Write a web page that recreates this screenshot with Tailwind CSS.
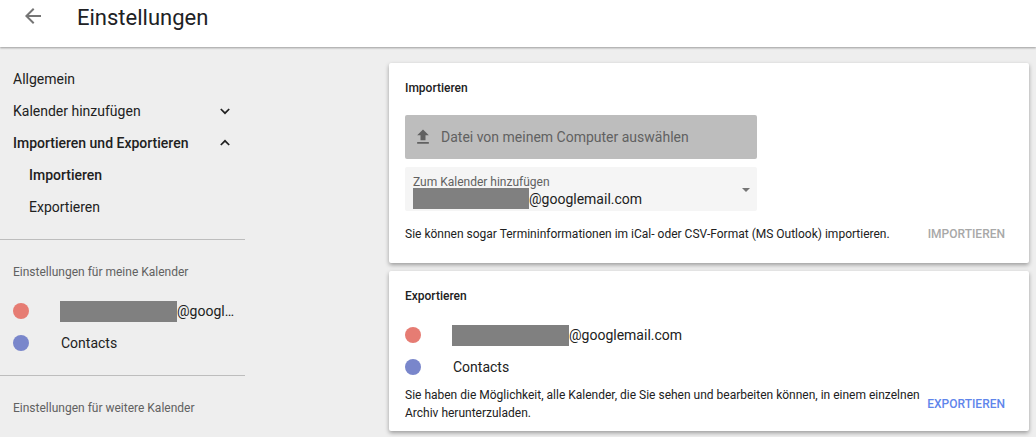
<html>

<head>
    <meta charset="utf-8" />
    <script src="https://cdn.jsdelivr.net/npm/@tailwindcss/browser@4"></script>
</head>

<body class="h-[437px] overflow-hidden bg-[#eeeeee] font-['Roboto',sans-serif] text-[#212121]">

    <header class="flex h-[47px] items-center bg-white shadow-[0_1px_2px_rgba(0,0,0,0.35)] relative">
        <svg class="ml-[21px] -mt-[16px] h-6 w-6 text-[#757575]" viewBox="0 0 24 24" fill="currentColor">
            <path d="M20 11H7.83l5.59-5.59L12 4l-8 8 8 8 1.41-1.41L7.83 13H20v-2z" />
        </svg>
        <h1 class="ml-[32px] -mt-[11px] text-[22px] leading-7 text-[#202124]">Einstellungen</h1>
    </header>

    <div class="flex">
        <nav class="w-[245px] pt-4 text-sm">
            <div class="flex h-8 items-center pl-[13px]">Allgemein</div>
            <div class="flex h-8 items-center justify-between pl-[13px] pr-3">
                Kalender hinzufügen
                <svg class="h-4 w-4" viewBox="0 0 16 16" fill="none" stroke="currentColor" stroke-width="1.7"><path d="M3.8 6l4.2 4.2L12.2 6" /></svg>
            </div>
            <div class="flex h-8 items-center justify-between pl-[13px] pr-3 font-medium">
                Importieren und Exportieren
                <svg class="h-4 w-4" viewBox="0 0 16 16" fill="none" stroke="currentColor" stroke-width="1.7"><path d="M3.8 10L8 5.8l4.2 4.2" /></svg>
            </div>
            <div class="flex h-8 items-center pl-[29px] font-medium">Importieren</div>
            <div class="flex h-8 items-center pl-[29px]">Exportieren</div>

            <div class="mt-4 border-t border-[#bdbdbd] pt-6">
                <div class="pl-[13px] text-xs leading-4 text-[#616161]">Einstellungen für meine Kalender</div>
                <div class="mt-[15px] flex h-8 items-center pl-[13px]">
                    <span class="h-4 w-4 shrink-0 rounded-full bg-[#e67c73]"></span>
                    <span class="ml-[31px] h-[21px] w-[117px] shrink-0 bg-[#808080]"></span>
                    <span class="truncate pr-[8px]">@googlemail.com</span>
                </div>
                <div class="flex h-8 items-center pl-[13px]">
                    <span class="h-4 w-4 shrink-0 rounded-full bg-[#7986cb]"></span>
                    <span class="ml-[32px]">Contacts</span>
                </div>
            </div>

            <div class="mt-4 border-t border-[#bdbdbd] pt-6">
                <div class="pl-[13px] text-xs leading-4 text-[#616161]">Einstellungen für weitere Kalender</div>
            </div>
        </nav>

        <main class="ml-[144px] w-[640px] pt-4">
            <section class="h-[200px] rounded-[2px] bg-white pl-4 pr-6 pt-[17px] shadow-[0_2px_4px_rgba(0,0,0,0.35)]">
                <h2 class="text-xs font-medium leading-4">Importieren</h2>
                <div class="mt-[19px] flex h-11 w-[352px] items-center rounded-[2px] bg-[#bdbdbd] pl-2 text-sm text-[#616161]">
                    <svg class="h-5 w-5" viewBox="0 0 24 24" fill="currentColor"><path d="M9 16h6v-6h4l-7-7-7 7h4v6zm-4 2h14v2H5v-2z" /></svg>
                    <span class="ml-2">Datei von meinem Computer auswählen</span>
                </div>
                <div class="relative mt-2 h-11 w-[352px] rounded-[2px] bg-[#f5f5f5] pl-2 pt-2">
                    <div class="text-xs leading-[14px] text-[#616161]">Zum Kalender hinzufügen</div>
                    <div class="-mt-px flex h-[21px] items-center text-sm">
                        <span class="h-[21px] w-[116px] bg-[#808080]"></span>@googlemail.com
                    </div>
                    <span class="absolute right-[7px] top-[21px] h-0 w-0 border-x-[4px] border-t-[4px] border-x-transparent border-t-[#757575]"></span>
                </div>
                <div class="mt-[15px] flex items-center justify-between text-xs leading-4">
                    <span>Sie können sogar Termininformationen im iCal- oder CSV-Format (MS Outlook) importieren.</span>
                    <span class="font-medium text-[#a8a8a8]">IMPORTIEREN</span>
                </div>
            </section>

            <section class="mt-2 h-[160px] rounded-[2px] bg-white pl-4 pr-6 pt-[17px] shadow-[0_2px_4px_rgba(0,0,0,0.35)]">
                <h2 class="text-xs font-medium leading-4">Exportieren</h2>
                <div class="mt-[15px] flex h-8 items-center text-sm">
                    <span class="h-4 w-4 shrink-0 rounded-full bg-[#e67c73]"></span>
                    <span class="ml-[31px] h-[21px] w-[117px] shrink-0 bg-[#808080]"></span>@googlemail.com
                </div>
                <div class="flex h-8 items-center text-sm">
                    <span class="h-4 w-4 shrink-0 rounded-full bg-[#7986cb]"></span>
                    <span class="ml-[32px]">Contacts</span>
                </div>
                <div class="mt-[3px] flex items-center justify-between text-xs leading-[18px]">
                    <span class="w-[520px]">Sie haben die Möglichkeit, alle Kalender, die Sie sehen und bearbeiten können, in einem einzelnen Archiv herunterzuladen.</span>
                    <span class="font-medium text-[#5f85eb]">EXPORTIEREN</span>
                </div>
            </section>
        </main>
    </div>
</body>

</html>
